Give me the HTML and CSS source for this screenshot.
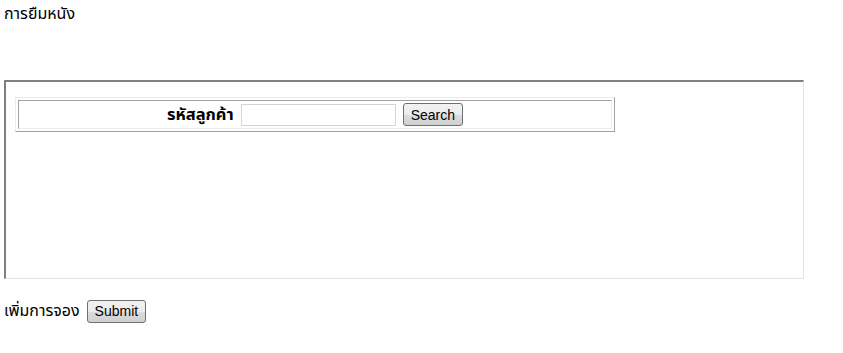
FILE: index.html
```html
<!DOCTYPE html>
<html lang="th">
<head>
  <meta charset="UTF-8">
  <title>การยืมหนัง</title>
  <link rel="stylesheet" href="styles.css">
</head>
<body>
  <div class="page-title">การยืมหนัง</div>

  <!-- customer lookup frame -->
  <div class="frame">
    <div class="search-table">
      <div class="search-cell">
        <label class="search-label" for="cust-id">รหัสลูกค้า</label>
        <input type="text" id="cust-id" class="search-input">
        <button type="button" class="btn">Search</button>
      </div>
    </div>
  </div>

  <div class="add-row">
    <span>เพิ่มการจอง</span>
    <button type="submit" class="btn btn-submit">Submit</button>
  </div>
</body>
</html>
```

FILE: styles.css
```css
* {
  margin: 0;
  padding: 0;
  box-sizing: border-box;
}

body {
  font-family: Tahoma, "Noto Sans Thai", "Noto Sans", "DejaVu Sans", sans-serif;
  font-size: 16px;
  color: #000;
  background-color: #fff;
  padding: 4px;
}

.page-title {
  height: 20px;
  line-height: 20px;
  margin-bottom: 56px;
}

.frame {
  width: 800px;
  height: 199px;
  border-style: solid;
  border-width: 2px 1px 1px 2px;
  border-color: #808080 #e3e3e3 #e3e3e3 #808080;
  padding: 15px 9px;
}

.search-table {
  width: 600px;
  padding: 2px;
  border: 1px solid;
  border-color: #ececec #a0a0a0 #a0a0a0 #ececec;
}

.search-cell {
  height: 29px;
  border: 1px solid;
  border-color: #a0a0a0 #ececec #ececec #a0a0a0;
  display: flex;
  align-items: center;
  justify-content: center;
  gap: 7px;
}

.search-label {
  font-weight: bold;
  font-size: 16.5px;
}

.search-input {
  width: 155px;
  height: 22px;
  border: 1px solid #d4d4d4;
  font-size: 13px;
  padding: 2px;
}

.btn {
  font-family: "Liberation Sans", Arial, sans-serif;
  font-size: 14px;
  height: 23px;
  padding: 0 7px;
  border: 1px solid #707070;
  border-radius: 3px;
  background: linear-gradient(#f2f2f2, #ebebeb 50%, #dddddd 51%, #cfcfcf);
  color: #000;
}

.add-row {
  margin-top: 20px;
  display: flex;
  align-items: center;
  gap: 7px;
}
```
